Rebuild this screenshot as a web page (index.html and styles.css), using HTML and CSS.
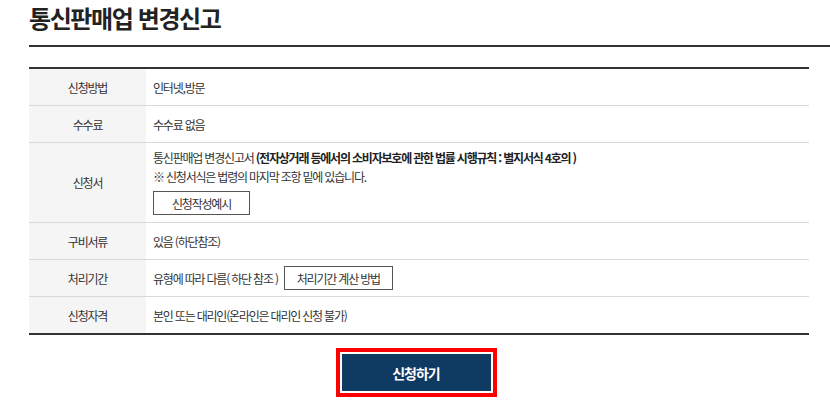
FILE: index.html
```html
<!DOCTYPE html>
<html lang="ko">
<head>
  <meta charset="UTF-8">
  <meta name="viewport" content="width=device-width, initial-scale=1.0">
  <title>통신판매업 변경신고</title>
  <link rel="stylesheet" href="styles.css">
</head>
<body>
  <div class="page">
    <div class="page-title">
      <h1>통신판매업 변경신고</h1>
    </div>

    <table class="info-table">
      <colgroup>
        <col class="col-label">
        <col>
      </colgroup>
      <tbody>
        <tr>
          <th>신청방법</th>
          <td>인터넷,방문</td>
        </tr>
        <tr>
          <th>수수료</th>
          <td>수수료 없음</td>
        </tr>
        <tr class="row-tall">
          <th>신청서</th>
          <td>
            <p>통신판매업 변경신고서 <strong>(전자상거래 등에서의 소비자보호에 관한 법률 시행규칙 : 별지서식 4호의 )</strong></p>
            <p>※ 신청서식은 법령의 마지막 조항 밑에 있습니다.</p>
            <a href="#" class="btn-line btn-example">신청작성예시</a>
          </td>
        </tr>
        <tr>
          <th>구비서류</th>
          <td>있음 (하단참조)</td>
        </tr>
        <tr>
          <th>처리기간</th>
          <td>
            <div class="inline-row">
              <span>유형에 따라 다름( 하단 참조 )</span>
              <a href="#" class="btn-line">처리기간 계산 방법</a>
            </div>
          </td>
        </tr>
        <tr>
          <th>신청자격</th>
          <td>본인 또는 대리인(온라인은 대리인 신청 불가)</td>
        </tr>
      </tbody>
    </table>

    <div class="actions">
      <span class="focus-ring">
        <button class="btn-apply" type="button">신청하기</button>
      </span>
    </div>
  </div>
</body>
</html>
```

FILE: styles.css
```css
:root {
  --text-main: #333333;
  --text-title: #222222;
  --line-dark: #333333;
  --line-soft: #d9d9d9;
  --bg-label: #f5f5f5;
  --navy: #0f3a62;
  --focus-red: #ff0000;
}

body {
  margin: 0;
  font-family: "Noto Sans CJK KR", "Noto Sans", sans-serif;
  color: var(--text-main);
  background: #ffffff;
  overflow: hidden;
}

.page {
  padding-left: 29px;
}

/* page heading with the thick rule underneath */
.page-title {
  border-bottom: 2px solid var(--line-dark);
  box-sizing: border-box;
  height: 47px;
}

.page-title h1 {
  margin: 0;
  padding-top: 2px;
  font-size: 24px;
  line-height: 32px;
  font-weight: 700;
  letter-spacing: -1.4px;
  color: var(--text-title);
}

.info-table {
  width: 780px;
  margin-top: 20px;
  border-collapse: collapse;
  border-top: 2px solid var(--line-dark);
  border-bottom: 2px solid var(--line-dark);
  font-size: 12px;
  letter-spacing: -1.2px;
}

.col-label {
  width: 117px;
}

.info-table th,
.info-table td {
  height: 36px;
  padding: 0;
  border-bottom: 1px solid var(--line-soft);
  line-height: 19px;
}

.info-table th {
  background: var(--bg-label);
  font-weight: 400;
  text-align: center;
}

.info-table td {
  padding-left: 7px;
  text-align: left;
}

.row-tall td {
  padding-top: 5px;
  padding-bottom: 7px;
}

.info-table p {
  margin: 0;
}

.info-table strong {
  font-weight: 700;
  color: #222222;
}

.btn-line {
  display: inline-flex;
  align-items: center;
  justify-content: center;
  box-sizing: border-box;
  height: 24px;
  padding: 0 12px;
  border: 1px solid #555555;
  color: var(--text-main);
  text-decoration: none;
  background: #ffffff;
}

.btn-example {
  width: 97px;
  margin-top: 5px;
}

.inline-row {
  display: flex;
  align-items: center;
  gap: 6px;
}

.actions {
  width: 780px;
  display: flex;
  justify-content: center;
  margin-top: 13px;
}

.focus-ring {
  display: block;
  margin-right: 6px;
  padding: 2px;
  border: 4px solid var(--focus-red);
}

.btn-apply {
  display: block;
  width: 149px;
  height: 37px;
  border: none;
  background: var(--navy);
  color: #ffffff;
  font-family: inherit;
  font-size: 14px;
  font-weight: 700;
  letter-spacing: -1px;
  cursor: pointer;
}
```
